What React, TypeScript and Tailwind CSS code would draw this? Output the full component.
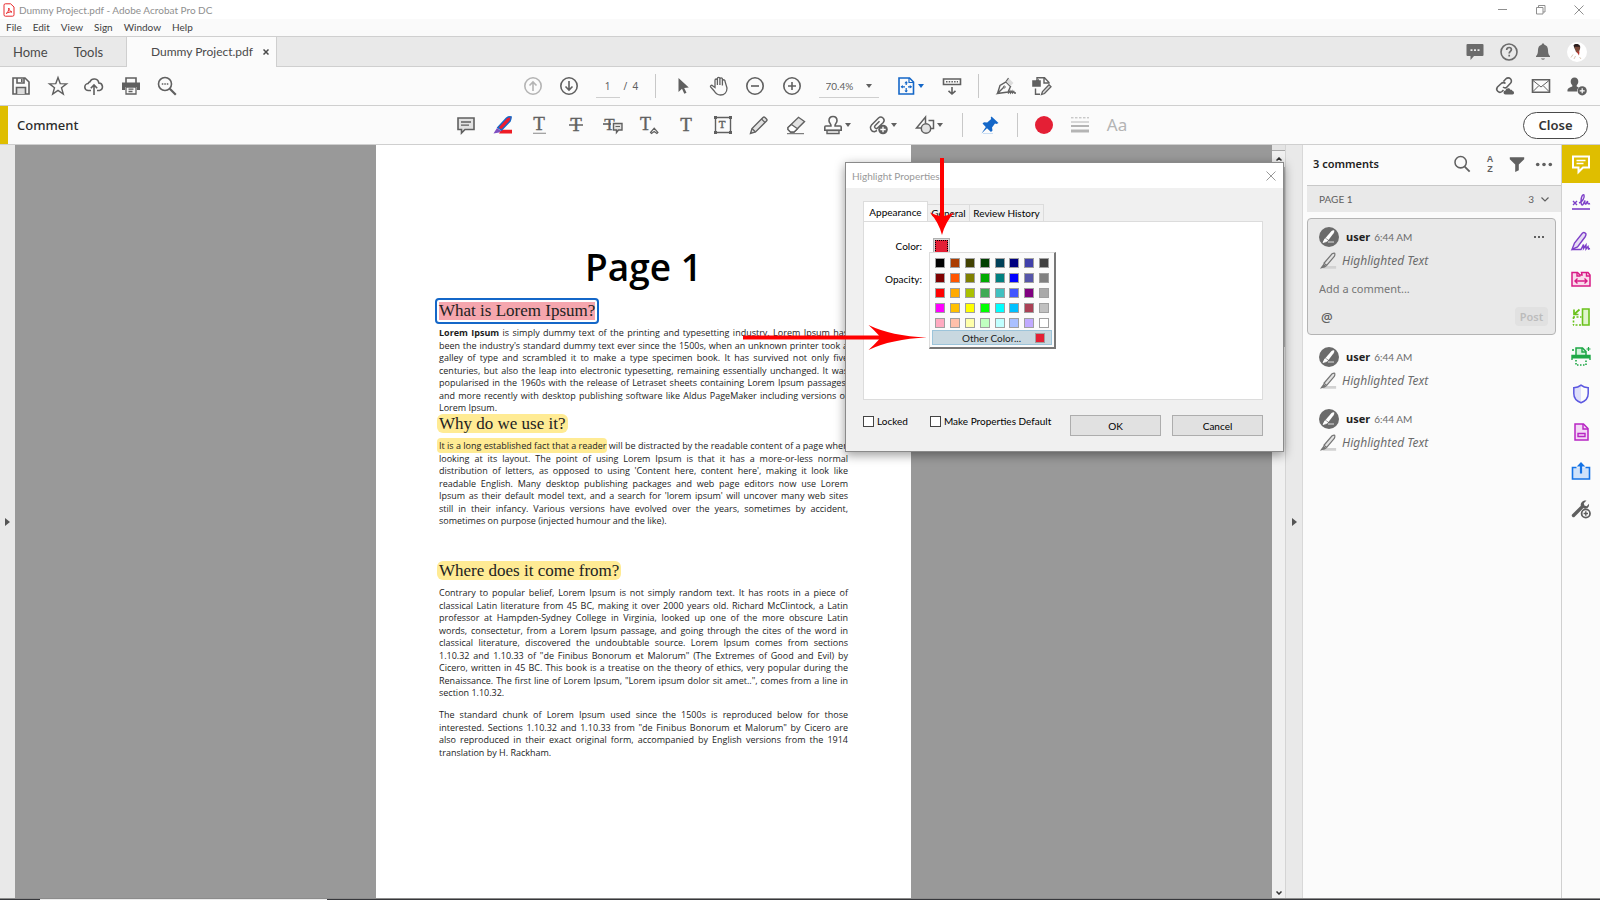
import React from "react";

type IconProps = { children: React.ReactNode; size?: string; className?: string };

function Icon({ children, size = "size-5", className = "" }: IconProps) {
  return (
    <svg
      viewBox="0 0 20 20"
      fill="none"
      stroke="currentColor"
      strokeWidth={1.6}
      aria-hidden="true"
      className={`${size} shrink-0 overflow-visible ${className}`}
    >
      {children}
    </svg>
  );
}

function Caret({ className = "" }: { className?: string }) {
  return (
    <svg viewBox="0 0 6 4" fill="currentColor" aria-hidden="true" className={`h-1 w-1.5 shrink-0 ${className}`}>
      <path d="M0 0h6L3 4z" />
    </svg>
  );
}

type ToolProps = { label: string; className?: string; children: React.ReactNode };

function Tool({ label, className = "w-9", children }: ToolProps) {
  return (
    <button type="button" aria-label={label} className={`flex h-7 items-center justify-center ${className}`}>
      {children}
    </button>
  );
}

function Divider({ className }: { className: string }) {
  return <span className={`h-6 w-px bg-[#c8c8c8] ${className}`} />;
}

function LetterT({ x = 10, y = 16, size = 19 }: { x?: number; y?: number; size?: number }) {
  return (
    <text
      x={x}
      y={y}
      fontSize={size}
      textAnchor="middle"
      fill="currentColor"
      stroke="currentColor"
      strokeWidth={0.4}
      fontFamily="'Liberation Serif', serif"
    >
      T
    </text>
  );
}

function TitleBar() {
  return (
    <div className="flex h-[19px] shrink-0 items-center bg-white text-[#8f8f8f]">
      <svg viewBox="0 0 12 14" fill="none" stroke="#e8282b" aria-hidden="true" className="ml-[3px] h-3.5 w-3">
        <path d="M1 2.200A1.400 1.400 0 0 1 2.400.8h5.200L11 4v7.800a1.400 1.400 0 0 1-1.400 1.400H2.400A1.400 1.400 0 0 1 1 11.800z" />
        <path d="M3.200 10.500c1.500-.8 2.800-3.400 2.600-5.500.2 2 1.500 3.600 3.200 4-2-.3-4 .3-5.800 1.500z" />
      </svg>
      <h1 className="ml-1 font-['Lato','Noto_Sans',sans-serif] text-[10px] leading-[14px]">
        Dummy Project.pdf - Adobe Acrobat Pro DC
      </h1>
      <div className="ml-auto flex items-center pr-4">
        <button type="button" aria-label="Minimize" className="mr-7">
          <svg viewBox="0 0 10 10" stroke="currentColor" className="size-2.5">
            <path d="M0 4.500h9" />
          </svg>
        </button>
        <button type="button" aria-label="Restore" className="mr-7">
          <svg viewBox="0 0 10 10" fill="none" stroke="currentColor" className="size-2.5">
            <path d="M.5 2.500h6.500v6.500H.5zM2.500 2.500v-2h6.500V7H7" />
          </svg>
        </button>
        <button type="button" aria-label="Close window">
          <svg viewBox="0 0 10 10" stroke="currentColor" className="size-2.5">
            <path d="M.5.5l9 9M9.500.5l-9 9" />
          </svg>
        </button>
      </div>
    </div>
  );
}

const menus = ["File", "Edit", "View", "Sign", "Window", "Help"];

function MenuBar() {
  return (
    <nav className="flex h-[18px] shrink-0 items-center gap-[11px] border-b border-[#cfcfcf] bg-[#fafafa] pb-0.5 pl-1.5 font-['Lato','Noto_Sans',sans-serif] text-[10px] leading-4 text-[#3f3f3f]">
      {menus.map((menu) => (
        <button type="button" key={menu}>
          {menu}
        </button>
      ))}
    </nav>
  );
}

function Avatar() {
  return (
    <svg viewBox="0 0 20 20" aria-label="Account" role="img" className="size-5">
      <circle cx="10" cy="10" r="10" fill="#fff" />
      <path d="M6.500 3.500c1-2 5.500-2 6.500.5.500 1.500 0 3-.5 3.500H8z" fill="#2a1d1d" />
      <path d="M7.800 4.800h5c.3 2-.2 5-2 6-2 .2-3-3-3-6z" fill="#7a4a3a" />
      <path d="M9.500 9.500h3l-.5 4z" fill="#b5382e" />
      <path d="M4 15.500l2-3M7 17l1.500-3M14 17l-1.500-2" stroke="#d9c9b8" />
    </svg>
  );
}

function TabBar() {
  return (
    <div className="flex h-[30px] shrink-0 items-stretch bg-[#e9e9e9] text-[#4a4a4a]">
      <div className="flex w-[126px] shrink-0 items-stretch border-b border-[#cfcfcf] font-['Lato','Noto_Sans',sans-serif] text-[13px] leading-4">
        <button type="button" className="ml-[13px]">
          Home
        </button>
        <button type="button" className="ml-[26px]">
          Tools
        </button>
      </div>
      <div className="flex w-[151px] shrink-0 items-center border-x border-[#cfcfcf] bg-[#fbfbfb] pl-6 font-['Lato','Noto_Sans',sans-serif]">
        <span className="text-[12px] leading-4">Dummy Project.pdf</span>
        <button type="button" aria-label="Close tab" className="ml-auto mr-[7px]">
          <svg viewBox="0 0 6 6" stroke="currentColor" strokeWidth={1.500} className="size-1.5">
            <path d="M.5.5l5 5M5.500.5l-5 5" />
          </svg>
        </button>
      </div>
      <div className="flex flex-1 items-center justify-end gap-3.5 border-b border-[#cfcfcf] pr-[13px] text-[#6b6b6b]">
        <button type="button" aria-label="Messages">
          <Icon>
            <path d="M2.500 2h15a1 1 0 0 1 1 1v10a1 1 0 0 1-1 1H9l-3.500 4v-4h-3a1 1 0 0 1-1-1V3a1 1 0 0 1 1-1z" fill="currentColor" stroke="none" />
            <path d="M5.500 8.200h2M9 8.200h2M12.500 8.200h2" stroke="#e9e9e9" strokeWidth={1.800} />
          </Icon>
        </button>
        <button type="button" aria-label="Help">
          <Icon>
            <circle cx="10" cy="10" r="8" />
            <path d="M7.700 8c0-1.600 1-2.500 2.400-2.500s2.300.8 2.300 2.100c0 1.700-2.200 1.800-2.200 3.900M10.200 12.800v1.700" strokeWidth={1.700} />
          </Icon>
        </button>
        <button type="button" aria-label="Notifications">
          <Icon>
            <path d="M10 1.500c.8 0 1.300.5 1.300 1.200 2.500.6 3.700 2.600 3.700 5.300 0 3.700.8 5 2 6v1H3v-1c1.200-1 2-2.300 2-6 0-2.700 1.200-4.700 3.700-5.300 0-.7.500-1.200 1.300-1.200zM8 16.500h4c-.3 1.500-3.700 1.500-4 0z" fill="currentColor" stroke="none" />
          </Icon>
        </button>
        <button type="button" aria-label="Profile">
          <Avatar />
        </button>
      </div>
    </div>
  );
}

function MainToolbar() {
  return (
    <div className="grid h-[39px] shrink-0 grid-cols-[minmax(0,1fr)_auto_minmax(0,1fr)] items-center border-b border-[#cfcfcf] bg-[#fbfbfb] text-[#606060]">
      <div className="ml-[3px] flex w-[182px] justify-between">
        <Tool label="Save">
          <Icon>
            <path d="M2 2h12l4 4v12H2z" />
            <path d="M6 2v5h7V2M10.800 3v3" />
            <path d="M5.500 18v-6.500h9V18" fill="#dcdcdc" />
          </Icon>
        </Tool>
        <Tool label="Star">
          <Icon>
            <path d="M10 1.500l2.200 6.100 6.400.2-5.100 4 1.800 6.300-5.300-3.700-5.300 3.700 1.800-6.300-5.100-4 6.400-.2z" strokeWidth={1.400} />
          </Icon>
        </Tool>
        <Tool label="Upload to cloud">
          <Icon>
            <path d="M7 14.500H4.500a3.500 3.500 0 0 1-.4-7A3 3 0 0 1 6 5.800 4.600 4.600 0 0 1 14.800 7a3.800 3.800 0 0 1 .7 7.500H13M10 19V9.500M6.800 12.200L10 9l3.200 3.200" />
          </Icon>
        </Tool>
        <Tool label="Print">
          <Icon>
            <path d="M5 7V2h10v5" />
            <path d="M1 6.500h18v7.500h-3V11H4v3H1z" fill="currentColor" stroke="none" />
            <path d="M5 11h10v7H5zM7.500 13.200h5M7.500 15.500h4" strokeWidth={1.300} />
          </Icon>
        </Tool>
        <Tool label="Find">
          <Icon>
            <circle cx="8" cy="8" r="6.500" />
            <path d="M12.800 12.800l6 6" strokeWidth={2.200} />
            <path d="M4.800 8h1.500M7.300 8h1.500M9.800 8h1.500" strokeWidth={1.500} />
          </Icon>
        </Tool>
      </div>
      <div className="flex items-center pr-[26px]">
        <Tool label="Previous page" className="w-9 text-[#b4b4b4]">
          <Icon>
            <circle cx="10" cy="10" r="8.200" />
            <path d="M10 15V6M6.500 9.500L10 6l3.500 3.500" />
          </Icon>
        </Tool>
        <Tool label="Next page">
          <Icon>
            <circle cx="10" cy="10" r="8.200" />
            <path d="M10 5v9M6.500 10.500L10 14l3.500-3.500" />
          </Icon>
        </Tool>
        <input
          aria-label="Page number"
          defaultValue="1"
          className="ml-[9px] h-6 w-6 border-b border-[#cfcfcf] bg-transparent text-center text-[10px]"
        />
        <span className="ml-1 w-5 text-[10px] leading-4">/&nbsp; 4</span>
        <Divider className="ml-[11px]" />
        <Tool label="Select" className="ml-[9px] w-9">
          <Icon>
            <path d="M5.500 2v14l3.500-3.300 2.300 5 2.200-1-2.300-4.800 4.600-.3z" fill="currentColor" stroke="none" />
          </Icon>
        </Tool>
        <Tool label="Hand">
          <Icon>
            <path d="M6 11.500V4.200a1.200 1.200 0 0 1 2.400 0V9 2.600a1.200 1.200 0 0 1 2.500 0V9 3.200a1.200 1.200 0 0 1 2.500 0V9.500 5a1.200 1.200 0 0 1 2.500 0L18 12c0 4-2.500 7-6.500 7-3.200 0-4.800-1.500-6.300-4L1.600 11c-.7-1.400 1-2.300 2-1.300z" strokeWidth={1.300} />
          </Icon>
        </Tool>
        <Tool label="Zoom out" className="w-[37px]">
          <Icon>
            <circle cx="10" cy="10" r="8.200" />
            <path d="M6 10h8" />
          </Icon>
        </Tool>
        <Tool label="Zoom in">
          <Icon>
            <circle cx="10" cy="10" r="8.200" />
            <path d="M6 10h8M10 6v8" />
          </Icon>
        </Tool>
        <div className="ml-[9px] grid h-6 w-[60px] items-center border-b border-[#cfcfcf]">
          <select
            aria-label="Zoom level"
            className="col-start-1 row-start-1 appearance-none bg-transparent pl-[7px] font-['Lato','Noto_Sans',sans-serif] text-[10px] leading-4"
          >
            <option>70.4%</option>
          </select>
          <Caret className="pointer-events-none col-start-1 row-start-1 mr-[7px] justify-self-end" />
        </div>
        <Tool label="Fit page" className="ml-[13px] w-9 gap-0.5 text-[#1467c8]">
          <Icon>
            <path d="M3 2h10.500L17.500 6v12H3z" />
            <path d="M13 2v4.500h4.500" strokeWidth={1.200} />
            <path d="M10.200 6v3M10.200 12v4M5.500 10.800H9M12 10.800h3.500" strokeWidth={1.200} />
            <path d="M8.400 7.200l1.800-2.200L12 7.200zM8.400 14.400l1.800 2.200 1.800-2.200zM6.800 9L4.600 10.800l2.200 1.800zM13.800 9L16 10.800l-2.200 1.800z" fill="currentColor" stroke="none" />
          </Icon>
          <Caret />
        </Tool>
        <Tool label="Scroll mode" className="ml-1.5 w-9">
          <Icon>
            <path d="M1.500 3h17v5.500h-17z" />
            <path d="M4 5.800h12" strokeDasharray="1.500 1.200" />
            <path d="M10 11v7M6.500 14.800L10 18l3.500-3.200" />
          </Icon>
        </Tool>
        <Divider className="ml-2" />
        <Tool label="Sign" className="ml-[9px] w-9">
          <Icon>
            <path d="M1.500 17.500L4 9.500 10 6l4.500 4.500-2.500 5.500-10.500 1.500 6-6" strokeWidth={1.400} />
            <path d="M10 5.500L12.500 2l5 5-3 3z" fill="#dcdcdc" stroke="none" />
            <path d="M10 5.500L12.500 2" strokeWidth={1.200} />
            <circle cx="8.300" cy="11" r="1" strokeWidth={1} />
            <path d="M12 17.500l2-2.500.5 2 1.500-2 .5 2 1.300-1.500.7 1.500h1.500" strokeWidth={1.300} />
          </Icon>
        </Tool>
        <Tool label="Edit PDF">
          <Icon>
            <path d="M1 5h7v5H1zM4 4h3" fill="currentColor" />
            <path d="M5 3V1.800h7.500L17 6.500v1.200M12 2v5h4.500M3.500 12.500v5.700H8" strokeWidth={1.400} />
            <path d="M9.500 18.500l1-3 6.500-6.700 2 2-6.500 6.700z" fill="#dcdcdc" strokeWidth={1.300} />
          </Icon>
        </Tool>
      </div>
      <div className="flex justify-end pr-[5px]">
        <Tool label="Share link">
          <Icon>
            <path d="M8.500 5.500L11 2.800a3 3 0 0 1 4.500 4.400l-3.300 3.500a3 3 0 0 1-4.200.3M10.500 7.500a3 3 0 0 0-4.300 0L2.500 11a3.200 3.200 0 0 0 4.500 4.500l1.500-1.500" />
            <path d="M10.500 18.500a2 2 0 0 1 0-4c.4-2.600 4.500-3 5-.6 1-.2 1.800.3 2 1.100 2 .1 2 3.500 0 3.500z" fill="currentColor" stroke="none" />
          </Icon>
        </Tool>
        <Tool label="Send by email">
          <Icon>
            <path d="M1.500 3.800h17v12.400h-17z" />
            <path d="M2 4.500l8 6.500 8-6.500M2 15.500l5.700-5.700M18 15.500l-5.700-5.700" strokeWidth={1} />
          </Icon>
        </Tool>
        <Tool label="Share with people">
          <Icon>
            <path d="M7.500 1.500c2.500 0 3.800 1.700 3.800 4 0 1.700-.8 3-1.600 3.800v1.200l2 .9a5 5 0 0 0-1.700 4.100H.5c-.2-3 .8-3.600 4.800-5V9.300C4.500 8.500 3.700 7.200 3.700 5.500c0-2.300 1.300-4 3.800-4z" fill="currentColor" stroke="none" />
            <circle cx="15.200" cy="14.800" r="4.600" fill="currentColor" stroke="none" />
            <path d="M15.200 12.300v5M12.700 14.800h5" stroke="#fff" strokeWidth={1.200} />
          </Icon>
        </Tool>
      </div>
    </div>
  );
}

function CommentToolbar() {
  return (
    <div className="grid h-[39px] shrink-0 grid-cols-[minmax(0,1fr)_auto_minmax(0,1fr)] items-center border-b border-[#cfcfcf] bg-[#fbfbfb] text-[#606060]">
      <div className="flex items-center self-stretch">
        <span className="w-2 self-stretch bg-[#dfbe00]" />
        <h2 className="ml-[9px] text-[13px] font-medium leading-4 text-[#2b2b2b]">Comment</h2>
      </div>
      <div className="flex items-center pr-3">
        <div className="flex w-[358px] items-center justify-between">
          <Tool label="Sticky note" className="w-7">
            <Icon>
              <path d="M2 3h16v11.500H9L5.500 18v-3.500H2z" fill="#e2e2e2" />
              <path d="M5 7h10M5 10.200h8" strokeWidth={1.300} />
            </Icon>
          </Tool>
          <Tool label="Highlight text" className="w-7">
            <Icon>
              <path d="M8 14.800h11v3.700H6z" fill="#ee1c25" stroke="none" />
              <path d="M4.800 12.500L13.500 3q2.500-1.800 4.700-1-.2 2.500-1.200 4.300L8.500 15z" fill="#ee1c30" stroke="#1467c8" strokeWidth={1.400} />
              <path d="M4 13l4 3-2 1.500-5.500 1z" fill="#7d4ec0" stroke="none" />
            </Icon>
          </Tool>
          <Tool label="Underline text" className="w-7">
            <Icon>
              <LetterT y={15} />
              <path d="M4 18.300h13" stroke="#9a9a9a" strokeWidth={1.200} />
            </Icon>
          </Tool>
          <Tool label="Strikethrough text" className="w-7">
            <Icon>
              <LetterT />
              <path d="M3 10h14" strokeWidth={1.500} />
            </Icon>
          </Tool>
          <Tool label="Replace text" className="w-7">
            <Icon>
              <LetterT x={6.500} y={15} size={17} />
              <path d="M0 9h8" />
              <path d="M10.500 8.500h8.500v6.500h-3.500L13.500 17.500V15h-3z" fill="#e2e2e2" strokeWidth={1.400} />
              <path d="M12.500 11.500h4.500" strokeWidth={1} />
            </Icon>
          </Tool>
          <Tool label="Insert text" className="w-7">
            <Icon>
              <LetterT x={6.500} y={15} size={18} />
              <path d="M11.500 17.500l3.700-4.300 3.700 4.300-1 1-2.700-2-2.700 2z" strokeWidth={1.200} />
            </Icon>
          </Tool>
          <Tool label="Add text comment" className="w-7">
            <Icon>
              <LetterT />
            </Icon>
          </Tool>
          <Tool label="Text box" className="w-7">
            <Icon>
              <path d="M2.500 2.500h15v15h-15z" strokeWidth={1.400} />
              <path d="M1 1h3v3H1zM16 1h3v3h-3zM1 16h3v3H1zM16 16h3v3h-3z" fill="currentColor" stroke="none" />
              <LetterT x={9} y={12.500} size={11} />
            </Icon>
          </Tool>
          <Tool label="Draw" className="w-7">
            <Icon>
              <path d="M1.500 18.500l1.500-5L14 2.500q1-1 2 0l1.500 1.500q1 1 0 2L6.500 17z" fill="#e2e2e2" strokeWidth={1.400} />
              <path d="M12.500 4l3.500 3.500M3 13.500L6.500 17" strokeWidth={1.200} />
            </Icon>
          </Tool>
          <Tool label="Erase" className="w-7">
            <Icon>
              <path d="M2 12.500L12.500 2.300l6 4.200L8 17H4.500L2 14.500z" fill="#e2e2e2" strokeWidth={1.400} />
              <path d="M5.500 9.500l6 4.300L8 17H4.500L2 14.500v-2z" fill="#fff" strokeWidth={1.300} />
              <path d="M1 18.700h17" strokeWidth={1} />
            </Icon>
          </Tool>
        </div>
        <Tool label="Stamp" className="ml-1 w-[46px] gap-0.5">
          <Icon>
            <path d="M8 11c.4-2-2-3-2-5.200C6 3.300 7.700 1.500 10 1.500s4 1.800 4 4.300c0 2.200-2.400 3.200-2 5.200h5.300q.9 0 .9.900v3.300H1.800v-3.300q0-.9.900-.9z" />
            <path d="M4 15.500h12v3H4z" strokeWidth={1.400} />
          </Icon>
          <Caret />
        </Tool>
        <Tool label="Attach file" className="w-[46px] gap-0.5">
          <Icon>
            <path d="M8 15.500l-2.500 1.200A4 4 0 0 1 2.500 10l7-7a3.300 3.300 0 0 1 4.800 4.500L8.500 13a1.700 1.700 0 0 1-2.500-2.300l4.500-4.500" strokeWidth={1.500} />
            <circle cx="14" cy="14.500" r="4.800" fill="currentColor" stroke="none" />
            <path d="M14 11.800v5.400M11.300 14.500h5.400" stroke="#fff" strokeWidth={1.300} />
          </Icon>
          <Caret />
        </Tool>
        <Tool label="Drawing tools" className="w-[46px] gap-0.5">
          <Icon>
            <path d="M6.500 13H1.500L10.500 2v6.500M13.500 5.500h5v8h-3" strokeWidth={1.500} />
            <circle cx="11" cy="13.500" r="4.700" fill="#e2e2e2" strokeWidth={1.500} />
          </Icon>
          <Caret />
        </Tool>
        <Divider className="ml-2.5" />
        <Tool label="Keep tool selected" className="ml-[9px] w-9 text-[#1467c8]">
          <Icon>
            <path d="M11.500 1.500l7 6.500-2 1-1.500-.5-3 4 .5 3-1.500 1.500-4-3.800L1.500 18.500 5.800 12 2.500 8.500 4 7.200l3.200.3 4-3.500-.5-1.300z" fill="currentColor" stroke="none" />
            <path d="M3 18.500h10" stroke="#c9ddf3" strokeWidth={1} />
          </Icon>
        </Tool>
        <Divider className="ml-[9px]" />
        <Tool label="Color" className="ml-2 w-9">
          <span className="size-[18px] rounded-full bg-[#e41f35]" />
        </Tool>
        <Tool label="Line thickness" className="w-9 text-[#b4b4b4]">
          <Icon>
            <path d="M1 2.800h18" strokeWidth={1} strokeDasharray="2.500 1.500" />
            <path d="M1 7h18" strokeWidth={1} />
            <path d="M1 11h18" strokeWidth={2} />
            <path d="M1 16h18" strokeWidth={3} />
          </Icon>
        </Tool>
        <Tool label="Text properties" className="w-[38px] text-[17px] leading-5 text-[#b4b4b4]">
          Aa
        </Tool>
      </div>
      <div className="flex justify-end pr-3">
        <button
          type="button"
          className="h-[27px] w-[65px] rounded-full border border-[#4a4a4a] bg-white text-[13px] font-semibold leading-4 text-[#333]"
        >
          Close
        </button>
      </div>
    </div>
  );
}

function Line({ children, last = false }: { children: React.ReactNode; last?: boolean }) {
  return (
    <span className={`block whitespace-nowrap ${last ? "" : "[text-align-last:justify]"}`}>{children}</span>
  );
}

function Paragraph({ lines, className }: { lines: React.ReactNode[]; className: string }) {
  return (
    <p className={`flex flex-col justify-between text-[9px] leading-3 text-[#1c1c1c] ${className}`}>
      {lines.map((line, i) => (
        <Line key={i} last={i === lines.length - 1}>
          {line}
        </Line>
      ))}
    </p>
  );
}

const whatIs: React.ReactNode[] = [
  <>
    <b>Lorem Ipsum</b> is simply dummy text of the printing and typesetting industry. Lorem Ipsum has
  </>,
  "been the industry's standard dummy text ever since the 1500s, when an unknown printer took a",
  "galley of type and scrambled it to make a type specimen book. It has survived not only five",
  "centuries, but also the leap into electronic typesetting, remaining essentially unchanged. It was",
  "popularised in the 1960s with the release of Letraset sheets containing Lorem Ipsum passages,",
  "and more recently with desktop publishing software like Aldus PageMaker including versions of",
  "Lorem Ipsum.",
];

const whyUse: React.ReactNode[] = [
  <>
    <mark className="-ml-0.5 rounded bg-[#ffeb94] py-px pl-0.5 text-inherit">It is a long established fact that a reader</mark>{" "}
    will be distracted by the readable content of a page when
  </>,
  "looking at its layout. The point of using Lorem Ipsum is that it has a more-or-less normal",
  "distribution of letters, as opposed to using 'Content here, content here', making it look like",
  "readable English. Many desktop publishing packages and web page editors now use Lorem",
  "Ipsum as their default model text, and a search for 'lorem ipsum' will uncover many web sites",
  "still in their infancy. Various versions have evolved over the years, sometimes by accident,",
  "sometimes on purpose (injected humour and the like).",
];

const whereFrom: React.ReactNode[] = [
  "Contrary to popular belief, Lorem Ipsum is not simply random text. It has roots in a piece of",
  "classical Latin literature from 45 BC, making it over 2000 years old. Richard McClintock, a Latin",
  "professor at Hampden-Sydney College in Virginia, looked up one of the more obscure Latin",
  "words, consectetur, from a Lorem Ipsum passage, and going through the cites of the word in",
  "classical literature, discovered the undoubtable source. Lorem Ipsum comes from sections",
  "1.10.32 and 1.10.33 of \"de Finibus Bonorum et Malorum\" (The Extremes of Good and Evil) by",
  "Cicero, written in 45 BC. This book is a treatise on the theory of ethics, very popular during the",
  "Renaissance. The first line of Lorem Ipsum, \"Lorem ipsum dolor sit amet..\", comes from a line in",
  "section 1.10.32.",
];

const standardChunk: React.ReactNode[] = [
  "The standard chunk of Lorem Ipsum used since the 1500s is reproduced below for those",
  "interested. Sections 1.10.32 and 1.10.33 from \"de Finibus Bonorum et Malorum\" by Cicero are",
  "also reproduced in their exact original form, accompanied by English versions from the 1914",
  "translation by H. Rackham.",
];

const headingFont = "font-['Liberation_Serif',serif] text-[17px] text-[#222]";

function DocumentPage() {
  return (
    <article className="w-[535px] shrink-0 bg-white px-[63px] font-['Open_Sans','Noto_Sans',sans-serif] text-black">
      <h2 className="pt-24 text-center text-[37px] font-semibold leading-[52px]">Page 1</h2>
      <h3 className={`-ml-1 mt-[5px] flex h-[26px] w-fit items-center rounded border-2 border-[#1467c8] p-0.5 ${headingFont}`}>
        <span className="bg-[#f5a6ae] leading-[18px]">What is Lorem Ipsum?</span>
      </h3>
      <Paragraph lines={whatIs} className="mt-[3px] h-[87px]" />
      <h3 className={`-ml-0.5 h-[19px] w-fit rounded-md bg-[#ffeb94] px-0.5 leading-[19px] ${headingFont}`}>
        Why do we use it?
      </h3>
      <Paragraph lines={whyUse} className="mt-[7px] h-[87px]" />
      <h3 className={`-ml-0.5 mt-[34px] h-[19px] w-fit rounded-md bg-[#ffeb94] px-0.5 leading-[19px] ${headingFont}`}>
        Where does it come from?
      </h3>
      <Paragraph lines={whereFrom} className="mt-[7px] h-[112px]" />
      <Paragraph lines={standardChunk} className="mt-2.5 h-[50px]" />
    </article>
  );
}

function Scrollbar() {
  return (
    <div className="flex w-3.5 shrink-0 flex-col items-center border-r border-[#d4d4d4] bg-[#f0f0f0] text-[#333]">
      <span className="h-1.5 w-full border-b border-[#a8a8a8] bg-[#e4e4e4]" />
      <button type="button" aria-label="Scroll up" className="py-1.5">
        <svg viewBox="0 0 6 4" fill="none" stroke="currentColor" strokeWidth={1.500} className="h-1 w-1.5">
          <path d="M.5 3.500L3 1l2.500 2.500" />
        </svg>
      </button>
      <span className="h-[180px] w-full bg-[#b8b8b8]" />
      <button type="button" aria-label="Scroll down" className="mt-auto pb-[3px]">
        <svg viewBox="0 0 6 4" fill="none" stroke="currentColor" strokeWidth={1.500} className="h-1 w-1.5">
          <path d="M.5.5L3 3 5.500.5" />
        </svg>
      </button>
    </div>
  );
}

function PaneToggle({ label, className }: { label: string; className: string }) {
  return (
    <button type="button" aria-label={label} className={`flex shrink-0 items-center justify-center bg-[#e9e9e9] ${className}`}>
      <svg viewBox="0 0 5 8" fill="#555" className="h-2 w-[5px]">
        <path d="M0 0l5 4-5 4z" />
      </svg>
    </button>
  );
}

const palette: string[][] = [
  ["#000000", "#aa3c00", "#404000", "#004000", "#004058", "#000080", "#4040aa", "#404040"],
  ["#800000", "#ff5500", "#808000", "#00aa00", "#008080", "#0000ff", "#5555aa", "#808080"],
  ["#ff0000", "#ffaa00", "#aac000", "#40aa55", "#40c0c0", "#4055ff", "#800080", "#aaaaaa"],
  ["#ff00ff", "#ffc000", "#ffff00", "#00ff00", "#00ffff", "#00c0ff", "#aa4055", "#c0c0c0"],
  ["#ffaac0", "#ffc0aa", "#ffffaa", "#c0ffc0", "#c0ffff", "#aac0ff", "#c0aaff", "#ffffff"],
];

function ColorMenu() {
  return (
    <div className="absolute left-[65px] top-[30px] w-[127px] border border-r-2 border-b-2 border-[#dcdcdc] border-r-[#777] border-b-[#777] bg-[#fbfbfb] p-0.5">
      <div className="grid grid-cols-8 gap-[5px] p-[3px] pb-0.5">
        {palette.flat().map((color) => (
          <button
            type="button"
            key={color}
            aria-label={color}
            className="size-2.5 border border-[#a0a0a0]"
            style={{ backgroundColor: color }}
          />
        ))}
      </div>
      <button
        type="button"
        className="flex h-[15px] w-full items-center justify-end border border-[#9cc4da] bg-[#c8d8e0] pr-1.5 leading-3 text-[#222]"
      >
        Other Color...
        <span className="ml-3.5 size-2.5 border border-[#a0a0a0] bg-[#e41f35]" />
      </button>
    </div>
  );
}

function PropertiesDialog() {
  return (
    <section
      role="dialog"
      aria-label="Highlight Properties"
      className="absolute left-[845px] top-[17px] w-[439px] border border-[#8a8a8a] bg-[#f0f0f0] font-['Lato','Noto_Sans',sans-serif] text-[10px] leading-4 text-black shadow-[0_3px_10px_rgba(0,0,0,0.4)]"
    >
      <header className="flex h-[25px] items-center justify-between bg-white pl-1.5 pr-[7px] text-[#999]">
        <h2>Highlight Properties</h2>
        <button type="button" aria-label="Close dialog">
          <svg viewBox="0 0 10 10" stroke="currentColor" className="size-2.5">
            <path d="M.5.5l9 9M9.500.5l-9 9" />
          </svg>
        </button>
      </header>
      <div className="pl-[17px] pr-5 pt-[13px]">
        <div role="tablist" className="flex items-end whitespace-nowrap">
          <button type="button" role="tab" aria-selected="true" className="h-5 w-[65px] border border-b-0 border-[#dcdcdc] bg-white">
            Appearance
          </button>
          <button type="button" role="tab" aria-selected="false" className="h-[17px] w-[42px] border-t border-r border-[#dcdcdc]">
            General
          </button>
          <button type="button" role="tab" aria-selected="false" className="h-[17px] w-[74px] border-t border-r border-[#dcdcdc]">
            Review History
          </button>
        </div>
        <div className="h-[179px] border border-[#dcdcdc] bg-white pt-4">
          <div className="relative flex h-4 items-center">
            <span className="w-[58px] text-right">Color:</span>
            <button type="button" aria-label="Pick color" className="ml-[11px] size-[17px] border border-[#b0b0b0] bg-[#d8d8d8] p-px">
              <span className="block size-full border border-dotted border-black bg-[#e41f35]" />
            </button>
            <div className="absolute left-0 top-[-16px]">
              <ColorMenu />
            </div>
          </div>
          <div className="mt-[17px] w-[58px] text-right">Opacity:</div>
        </div>
        <div className="flex h-[51px] items-start whitespace-nowrap pt-[13px]">
          <label className="flex items-center gap-[3px]">
            <input type="checkbox" className="size-[11px] appearance-none border border-[#444] bg-white" />
            Locked
          </label>
          <label className="ml-[22px] flex items-center gap-[3px]">
            <input type="checkbox" className="size-[11px] appearance-none border border-[#444] bg-white" />
            Make Properties Default
          </label>
          <button type="button" className="ml-auto mt-0.5 h-[21px] w-[91px] border border-[#adadad] bg-[#e1e1e1]">
            OK
          </button>
          <button type="button" className="ml-[11px] mt-0.5 h-[21px] w-[91px] border border-[#adadad] bg-[#e1e1e1]">
            Cancel
          </button>
        </div>
      </div>
    </section>
  );
}

function Pointers() {
  return (
    <>
      <svg viewBox="0 0 24 77" fill="#ff0000" aria-hidden="true" className="pointer-events-none absolute left-[930px] top-[13px] h-[77px] w-6">
        <path d="M10 0h4v58q5-1 10-3.500Q15 65 12 77 9 65 0 54.500 5 57 10 58z" />
      </svg>
      <svg viewBox="0 0 184 25" fill="#ff0000" aria-hidden="true" className="pointer-events-none absolute left-[743px] top-[180px] h-[25px] w-[184px]">
        <path d="M0 10.500h136Q131 5 125.500 0 148 11 184 12.500 148 14 125.500 25 131 20 136 14.500H0z" />
      </svg>
    </>
  );
}

function HighlighterIcon() {
  return (
    <Icon size="size-[18px]" className="text-[#757575]">
      <path d="M6 15.500h13v3H4z" fill="#d2d2d2" stroke="none" />
      <path d="M5.500 12.500L14.500 2q2-1 3-.5.5 1.500-.5 3.500L8.500 15z" fill="#e2e2e2" strokeWidth={1.300} />
      <path d="M5 13l3.500 2.800-2 1.500L1 18.500z" fill="currentColor" stroke="none" />
    </Icon>
  );
}

function Comment({ children }: { children?: React.ReactNode }) {
  return (
    <div>
      <div className="flex h-5 items-center">
        <svg viewBox="0 0 20 20" aria-hidden="true" className="size-5">
          <circle cx="10" cy="10" r="10" fill="#6b6b6b" />
          <path d="M6.500 11L12.500 4q1.500-1.200 2.800-.6.200 1.500-.7 2.800L9.500 13z" fill="#fff" />
          <path d="M6 11.600l2.800 2-1.500 1L4 15.500zM9 15h6" fill="#fff" stroke="#fff" strokeWidth={0.800} />
        </svg>
        <span className="ml-[7px] text-[11px] font-bold leading-4 text-[#1f1f1f]">user</span>
        <time className="ml-1 font-['Lato','Noto_Sans',sans-serif] text-[10px] leading-4 text-[#6b6b6b]">6:44 AM</time>
        {children}
      </div>
      <div className="mt-1 flex h-5 items-center">
        <HighlighterIcon />
        <span className="ml-[5px] text-[12px] italic leading-4 text-[#6b6b6b]">Highlighted Text</span>
      </div>
    </div>
  );
}

function CommentsPanel() {
  return (
    <aside className="flex w-[258px] shrink-0 flex-col bg-[#fbfbfb] pl-1 text-[#606060]">
      <header className="flex h-10 items-center pb-0.5 pl-1.5 pr-2">
        <h2 className="text-[11px] font-semibold leading-4 text-[#222]">3 comments</h2>
        <button type="button" aria-label="Search comments" className="ml-auto">
          <Icon size="size-[18px]">
            <circle cx="8.500" cy="8" r="6.300" strokeWidth={1.700} />
            <path d="M13 12.800l5.500 5.700" strokeWidth={2} />
          </Icon>
        </button>
        <button
          type="button"
          aria-label="Sort comments"
          className="ml-2.5 flex w-[18px] flex-col items-center font-['Liberation_Sans',sans-serif] text-[9px] font-bold leading-[10px]"
        >
          <span>A</span>
          <span>Z</span>
        </button>
        <button type="button" aria-label="Filter comments" className="ml-[9px]">
          <Icon size="size-[18px]">
            <path d="M2 2.500h16v2.200l-6 5.800V17l-4 2v-8.500L2 4.700z" fill="currentColor" stroke="none" />
          </Icon>
        </button>
        <button type="button" aria-label="More options" className="ml-[9px]">
          <Icon size="size-[18px]">
            <circle cx="3" cy="10.500" r="2" fill="currentColor" stroke="none" />
            <circle cx="10" cy="10.500" r="2" fill="currentColor" stroke="none" />
            <circle cx="17" cy="10.500" r="2" fill="currentColor" stroke="none" />
          </Icon>
        </button>
      </header>
      <button
        type="button"
        className="flex h-[27px] items-center border-t border-[#c8c8c8] bg-[#e9e9e9] pl-3 pr-3 font-['Lato','Noto_Sans',sans-serif] text-[10px] leading-4"
      >
        PAGE 1
        <span className="ml-auto mr-[7px]">3</span>
        <svg viewBox="0 0 8 5" fill="none" stroke="currentColor" strokeWidth={1.200} className="h-[5px] w-2">
          <path d="M.5.5L4 4 7.500.5" />
        </svg>
      </button>
      <div className="mt-1.5 mr-[5px] h-[117px] rounded border border-[#b4b4b4] bg-[#e9e9e9] pl-[11px] pr-[7px] pt-2">
        <Comment>
          <button type="button" aria-label="Comment options" className="ml-auto mr-1">
            <svg viewBox="0 0 10 2" fill="currentColor" className="h-0.5 w-2.5">
              <path d="M0 0h2v2H0zM4 0h2v2H4zM8 0h2v2H8z" />
            </svg>
          </button>
        </Comment>
        <input
          aria-label="Add a comment"
          placeholder="Add a comment..."
          className="mt-2.5 block h-4 w-full bg-transparent text-[11px] leading-4 placeholder:text-[#757575]"
        />
        <div className="mt-2.5 flex h-[19px] items-center justify-between pl-0.5">
          <button type="button" aria-label="Mention someone" className="text-[13px] font-medium leading-4">
            @
          </button>
          <button type="button" className="h-[19px] w-[33px] rounded-sm bg-[#e1e1e1] text-[11px] font-semibold leading-4 text-[#bcbcbc]">
            Post
          </button>
        </div>
      </div>
      <div className="flex flex-col gap-[18px] pl-3 pt-3">
        <Comment />
        <Comment />
      </div>
    </aside>
  );
}

function ToolRail() {
  return (
    <nav className="w-[39px] shrink-0 border-l border-[#d0d0d0] bg-[#fbfbfb]">
      <div className="grid h-[383px] grid-rows-10">
        <Tool label="Comment" className="h-full w-full bg-[#dfbe00] text-white">
          <Icon>
            <path d="M2 2.500h16v11h-6L7.500 18v-4.500H2z" strokeWidth={2} />
            <path d="M5.500 6.500h9M5.500 9.500h7" strokeWidth={1.400} />
          </Icon>
        </Tool>
        <Tool label="Fill and sign" className="h-full w-full text-[#7d3fc8]">
          <Icon>
            <path d="M1 17h18" />
            <path d="M2 9l4 4M6 9l-4 4" strokeWidth={1.400} />
            <path d="M8 11c3-1 6-5 5-8-1-1.500-3 2-3 6s1 4.500 2 3.500l2-4c-.5 3 0 4 1 3.500l1.500-3c0 2.500.5 3.500 2.500 2.500" strokeWidth={1.400} />
          </Icon>
        </Tool>
        <Tool label="Request signatures" className="h-full w-full text-[#7d3fc8]">
          <Icon>
            <path d="M1 18.500L3.500 12 11.500 2q2-1.200 3.500 1 0 1.500-1 3L6.500 16z" fill="#e6dcf4" strokeWidth={1.400} />
            <path d="M1 18.500h9l2.500-5v4l2.500-3.500v4l2-2.500.5 2.500 1.500-.5" strokeWidth={1.400} />
          </Icon>
        </Tool>
        <Tool label="Combine files" className="h-full w-full text-[#d81b86]">
          <Icon>
            <path d="M1 3.500h5.500L9 6h2l-.5-2.500h6.500L19 6v11H1z" fill="#fadcec" strokeWidth={1.500} />
            <path d="M6 3.500V7h3.500M15.500 3.500V7H19M4 12h12M6.500 9.500L4 12l2.500 2.500M13.500 9.500L16 12l-2.500 2.500" strokeWidth={1.400} />
          </Icon>
        </Tool>
        <Tool label="Organize pages" className="h-full w-full text-[#6bc21c]">
          <Icon>
            <path d="M11.500 2h6.500v16h-6.500z" fill="#e0f5cd" strokeWidth={1.600} />
            <path d="M2 10h8.500M2.500 10v8M10 18H2" strokeDasharray="2 1.500" />
            <path d="M8.500 2.500L3.500 7M3 2.500V7.500h4.500" strokeWidth={1.700} />
          </Icon>
        </Tool>
        <Tool label="Scan and OCR" className="h-full w-full text-[#1fa847]">
          <Icon>
            <path d="M5 9V2h6.500L15 5.500V9" fill="#d6f3de" strokeWidth={1.500} />
            <path d="M11 2v4h4M1 14V9.500h18V14" strokeWidth={1.400} />
            <path d="M1 9.500h18v3H1z" fill="currentColor" stroke="none" />
            <path d="M5 14v5h10v-5" strokeDasharray="1.500 1.500" />
            <path d="M17.500 1v4M15.500 3h4M1 4h2M2 3v2" strokeWidth={1.200} />
          </Icon>
        </Tool>
        <Tool label="Protect" className="h-full w-full text-[#5b57e0]">
          <Icon>
            <path d="M10 1.500v17c-4-1.500-7-4.500-7-9V4c3 0 5-1 7-2.500z" fill="#dedefa" stroke="none" />
            <path d="M10 1.200c2 1.600 4.300 2.400 7.200 2.600V9.500c0 4.500-3 7.700-7.200 9.300-4.200-1.600-7.200-4.800-7.200-9.300V3.800c2.900-.2 5.200-1 7.200-2.600z" strokeWidth={1.500} />
          </Icon>
        </Tool>
        <Tool label="Prepare form" className="h-full w-full text-[#b826c4]">
          <Icon>
            <path d="M4 2h8.500L17 6.500V18H4z" fill="#f3d9f6" strokeWidth={1.500} />
            <path d="M12 2v5h5M7 11.500h7v3H7z" strokeWidth={1.400} />
          </Icon>
        </Tool>
        <Tool label="Share" className="h-full w-full text-[#1473e6]">
          <Icon>
            <path d="M5.500 6.500h-4V18h17V6.500h-4" fill="#cfe2fa" strokeWidth={1.600} />
            <path d="M10 12.500V4" strokeWidth={2.200} />
            <path d="M5.800 5.500L10 1l4.200 4.500z" fill="currentColor" stroke="none" />
          </Icon>
        </Tool>
        <Tool label="More tools" className="h-full w-full text-[#5f5f5f]">
          <Icon>
            <path d="M2.500 16.500L10.500 8.500" strokeWidth={3.400} strokeLinecap="round" />
            <path d="M15.500 1.500L12.800 4.300l.6 2.300 2.300.6L18 4.800c.5 3.500-2 5.500-5 4.800L9.800 7c-.7-3.500 2.200-6.200 5.700-5.500z" fill="currentColor" stroke="none" />
            <circle cx="14.800" cy="14.500" r="4.200" fill="#fbfbfb" strokeWidth={1.800} />
            <path d="M14.800 12.300v4.400M12.600 14.500H17" strokeWidth={1.400} />
          </Icon>
        </Tool>
      </div>
    </nav>
  );
}

function TaskbarEdge() {
  return (
    <div className="flex h-0.5 shrink-0 border-t border-[#8c8c8c] bg-[#36373b]">
      <span className="ml-10 w-[287px] bg-[#ececec]" />
    </div>
  );
}

export default function App() {
  return (
    <div className="flex h-screen flex-col overflow-hidden bg-[#fbfbfb] font-['Noto_Sans','Open_Sans',sans-serif]">
      <TitleBar />
      <MenuBar />
      <TabBar />
      <MainToolbar />
      <CommentToolbar />
      <main className="relative flex min-h-0 flex-1">
        <PaneToggle label="Show navigation pane" className="w-[15px]" />
        <div className="flex min-w-0 flex-1 items-stretch justify-center overflow-hidden bg-[#999]">
          <DocumentPage />
        </div>
        <Scrollbar />
        <PaneToggle label="Hide comments pane" className="w-[17px] border-r border-[#d8d8d8]" />
        <CommentsPanel />
        <ToolRail />
        <PropertiesDialog />
        <Pointers />
      </main>
      <TaskbarEdge />
    </div>
  );
}
